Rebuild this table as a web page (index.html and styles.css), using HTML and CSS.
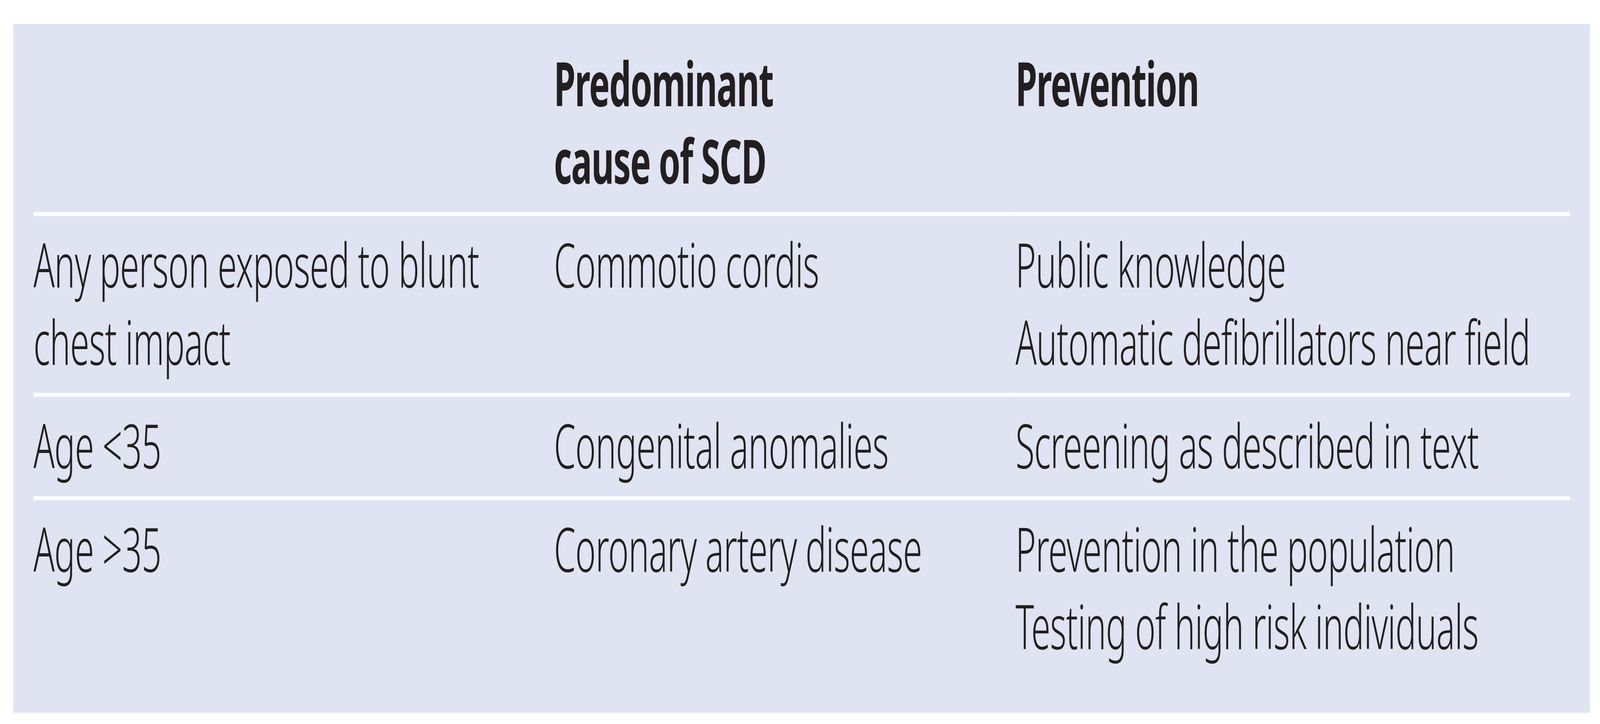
FILE: index.html
```html
<!DOCTYPE html>
<html lang="en">
<head>
<meta charset="utf-8">
<title>Sudden cardiac death prevention</title>
<link rel="stylesheet" href="styles.css">
</head>
<body>
<div class="frame">
  <div class="page">
    <div class="panel">
      <table class="scd-table">
        <colgroup>
          <col class="col-group">
          <col class="col-cause">
          <col class="col-prev">
        </colgroup>
        <thead>
          <tr>
            <th></th>
            <th>Predominant<br>cause of SCD</th>
            <th>Prevention</th>
          </tr>
        </thead>
        <tbody>
          <tr>
            <td>Any person exposed to blunt<br>chest impact</td>
            <td>Commotio cordis</td>
            <td>Public knowledge<br>Automatic defibrillators near field</td>
          </tr>
          <tr>
            <td>Age &lt;35</td>
            <td>Congenital anomalies</td>
            <td>Screening as described in text</td>
          </tr>
          <tr>
            <td>Age &gt;35</td>
            <td>Coronary artery disease</td>
            <td>Prevention in the population<br>Testing of high risk individuals</td>
          </tr>
        </tbody>
      </table>
    </div>
  </div>
</div>
</body>
</html>
```

FILE: styles.css
```css
html, body {
  margin: 0;
  padding: 0;
  background: #ffffff;
}

/* The frame keeps the page inside the window width. */
.frame {
  width: 100%;
  overflow: hidden;
}

/* The layout is drawn on a 7213px-wide canvas; on a narrower window the
   canvas is squeezed horizontally so it still spans the full width. */
.page {
  width: 7213px;
  padding-top: 61px;
  transform-origin: 0 0;
}

@media (max-width: 7200px) {
  .page {
    transform: scaleX(0.567864);
    transform: scaleX(calc(100vw / 7213px));
  }
}

.panel {
  margin-left: 61px;
  width: 7106px;
  box-sizing: border-box;
  padding: 0 90px 91px 90px;
  background: #e0e3f1;
}

.scd-table {
  width: 100%;
  border-collapse: collapse;
  table-layout: fixed;
  font-family: "Noto Sans", "Open Sans", "Liberation Sans", sans-serif;
  color: #231f20;
}

.col-group { width: 2346px; }
.col-cause { width: 2081px; }

.scd-table th,
.scd-table td {
  text-align: left;
  vertical-align: top;
  font-size: 157px;
  line-height: 198px;
  white-space: nowrap;
}

.scd-table th {
  font-weight: 700;
  letter-spacing: -3px;
  padding: 51px 0 35px;
}

.scd-table td {
  font-weight: 300;
  letter-spacing: -1.5px;
  padding: 23px 0 34px;
  border-top: 10px solid #ffffff;
}
```
